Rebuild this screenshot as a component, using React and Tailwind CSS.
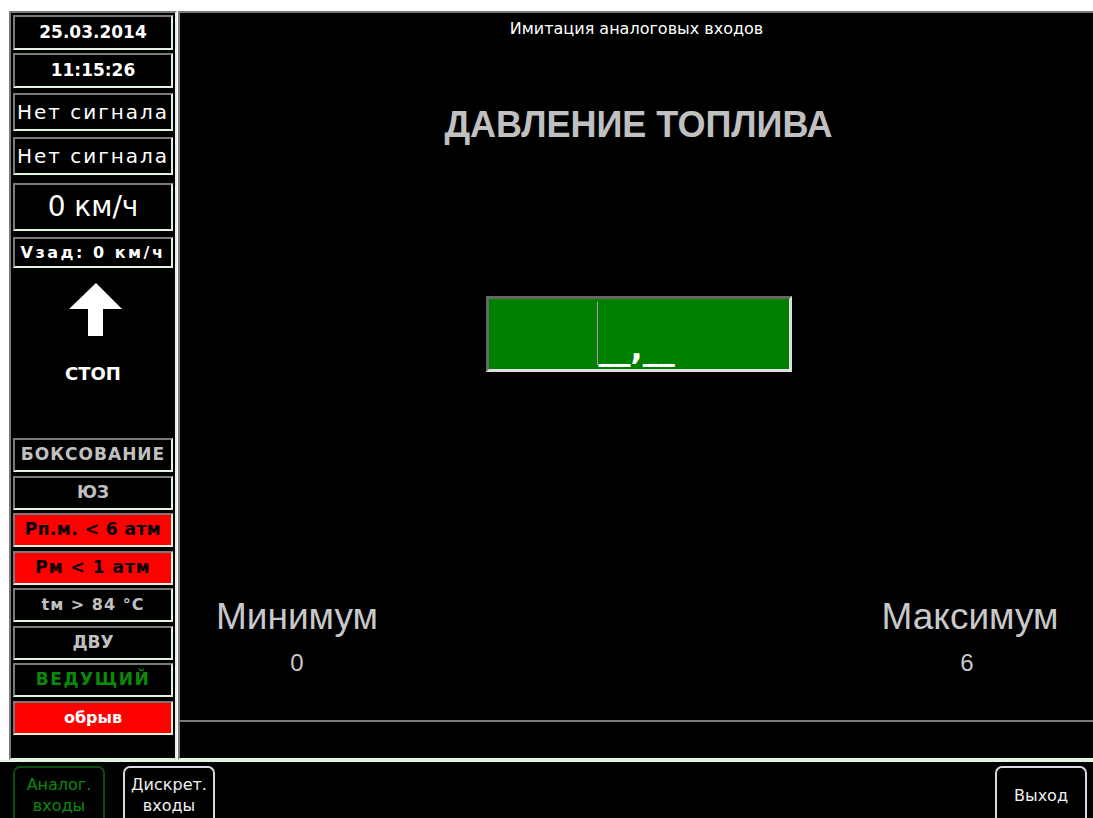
import React from 'react';

const dv = { fontFamily: '"DejaVu Sans", "Liberation Sans", sans-serif' };
const ls = { fontFamily: '"Liberation Sans", Arial, sans-serif' };

// sunken indicator cell of the side panel
const Cell = ({ children, className = '', h = 'h-[34px]', mt = 'mt-[4px]' }) => (
  <div
    className={`${h} ${mt} w-[160px] flex items-center justify-center border-2 border-t-[#7a7a7a] border-l-[#7a7a7a] border-b-[#e4f2e4] border-r-[#e4f2e4] ${className}`}
    style={dv}
  >
    {children}
  </div>
);

const TabButton = ({ label1, label2, green, className = '' }) => (
  <div
    className={`w-[92px] h-[52px] rounded-t-[7px] border-2 border-b-0 flex flex-col items-center justify-start text-[16px] leading-[21px] ${
      green ? 'border-[#0b4d0b] text-[#0a8a0a]' : 'border-[#d8d8e8] text-[#f0f0f0]'
    } ${className}`}
    style={dv}
  >
    <span>{label1}</span>
    {label2 && <span>{label2}</span>}
  </div>
);

const SidePanel = () => (
  <div className="w-[168px] shrink-0 bg-black border-2 border-t-[#7a7a7a] border-l-[#7a7a7a] border-r-[#e4f2e4] border-b-[#e4f2e4] flex flex-col items-center">
    <Cell h="h-[35px]" mt="mt-[2px]" className="text-white font-bold text-[17px]">25.03.2014</Cell>
    <Cell h="h-[35px]" mt="mt-[3px]" className="text-white font-bold text-[17px]">11:15:26</Cell>
    <Cell h="h-[38px]" mt="mt-[5px]" className="text-white text-[20px] tracking-[2px]">Нет сигнала</Cell>
    <Cell h="h-[38px]" mt="mt-[6px]" className="text-white text-[20px] tracking-[2px]">Нет сигнала</Cell>
    <Cell h="h-[48px]" mt="mt-[8px]" className="text-white text-[28px]">0 км/ч</Cell>
    <Cell h="h-[31px]" mt="mt-[6px]" className="text-white font-bold text-[16px] tracking-[2.5px]">Vзад: 0 км/ч</Cell>

    <svg width="54" height="54" viewBox="0 0 54 54" className="mt-[15px] ml-[5px]">
      <polygon points="27,0 53,26 34,26 34,53 19,53 19,26 0,26" fill="#ffffff" />
    </svg>
    <div className="mt-[26px] text-white font-bold text-[18px] leading-[22px]" style={dv}>
      СТОП
    </div>

    <Cell mt="mt-[53px]" className="text-[#c0c0c0] font-bold text-[17px] tracking-[1px]">БОКСОВАНИЕ</Cell>
    <Cell className="text-[#c0c0c0] font-bold text-[17px]">ЮЗ</Cell>
    <Cell mt="mt-[3px]" className="bg-[#ff0000] text-black font-bold text-[17px] tracking-[0.5px]">Рп.м. &lt; 6 атм</Cell>
    <Cell className="bg-[#ff0000] text-black font-bold text-[17px] tracking-[1px]">Рм &lt; 1 атм</Cell>
    <Cell mt="mt-[3px]" className="text-[#c0c0c0] font-bold text-[16px] tracking-[1px]">tм &gt; 84 °C</Cell>
    <Cell className="text-[#c0c0c0] font-bold text-[17px]">ДВУ</Cell>
    <Cell mt="mt-[3px]" className="text-[#0a8a0a] font-bold text-[17px] tracking-[1.5px]">ВЕДУЩИЙ</Cell>
    <Cell className="bg-[#ff0000] text-white font-bold text-[16px]">обрыв</Cell>
  </div>
);

const MainPanel = () => (
  <div className="flex-1 ml-[1px] bg-black border-t-2 border-l-2 border-b-2 border-t-[#7a7a7a] border-l-[#7a7a7a] border-b-[#e4f2e4] flex flex-col">
    <div className="flex-1 flex flex-col items-center">
      <div className="mt-[6px] text-white text-[16px] leading-[20px]" style={dv}>
        Имитация аналоговых входов
      </div>
      <div className="mt-[64px] ml-[4px] text-[#c0c0c0] font-bold text-[36px] leading-[44px]" style={ls}>
        ДАВЛЕНИЕ ТОПЛИВА
      </div>

      <div className="mt-[149px] ml-[4px] w-[306px] h-[76px] bg-[#008000] border-[3px] border-t-[#666666] border-l-[#666666] border-b-[#e0e0e0] border-r-[#e0e0e0] flex justify-center">
        <div className="relative w-[84px] h-full">
          <div className="absolute left-0 top-[3px] bottom-[4px] w-[1px] bg-[#c98aa8]" />
          <span
            className="absolute left-[2px] bottom-[4px] text-white font-bold text-[32px] leading-[34px]"
            style={dv}
          >
            __,__
          </span>
        </div>
      </div>

      <div className="mt-[225px] w-full flex justify-between pl-[27px] pr-[33px]" style={ls}>
        <div className="w-[180px] flex flex-col items-center text-[#c8c8c8]">
          <span className="text-[37px] leading-[40px]">Минимум</span>
          <span className="mt-[13px] text-[24px] leading-[26px] font-light">0</span>
        </div>
        <div className="w-[180px] flex flex-col items-center text-[#c8c8c8]">
          <span className="text-[37px] leading-[40px]">Максимум</span>
          <span className="mt-[13px] mr-[6px] text-[24px] leading-[26px] font-light">6</span>
        </div>
      </div>
    </div>
    <div className="h-[38px] border-t-2 border-t-[#7a7a7a]" />
  </div>
);

export default function App() {
  return (
    <div className="w-[1093px] h-[818px] bg-white flex flex-col overflow-hidden">
      <div className="h-[749px] mt-[11px] ml-[9px] flex">
        <SidePanel />
        <MainPanel />
      </div>
      <div className="flex-1 bg-black border-t-2 border-t-[#e4f2e4] flex items-end px-[13px]">
        <TabButton label1="Аналог." label2="входы" green className="pt-[6px]" />
        <TabButton label1="Дискрет." label2="входы" className="ml-[18px] pt-[6px]" />
        <TabButton label1="Выход" className="ml-auto mr-[-7px] pt-[17px]" />
      </div>
    </div>
  );
}
